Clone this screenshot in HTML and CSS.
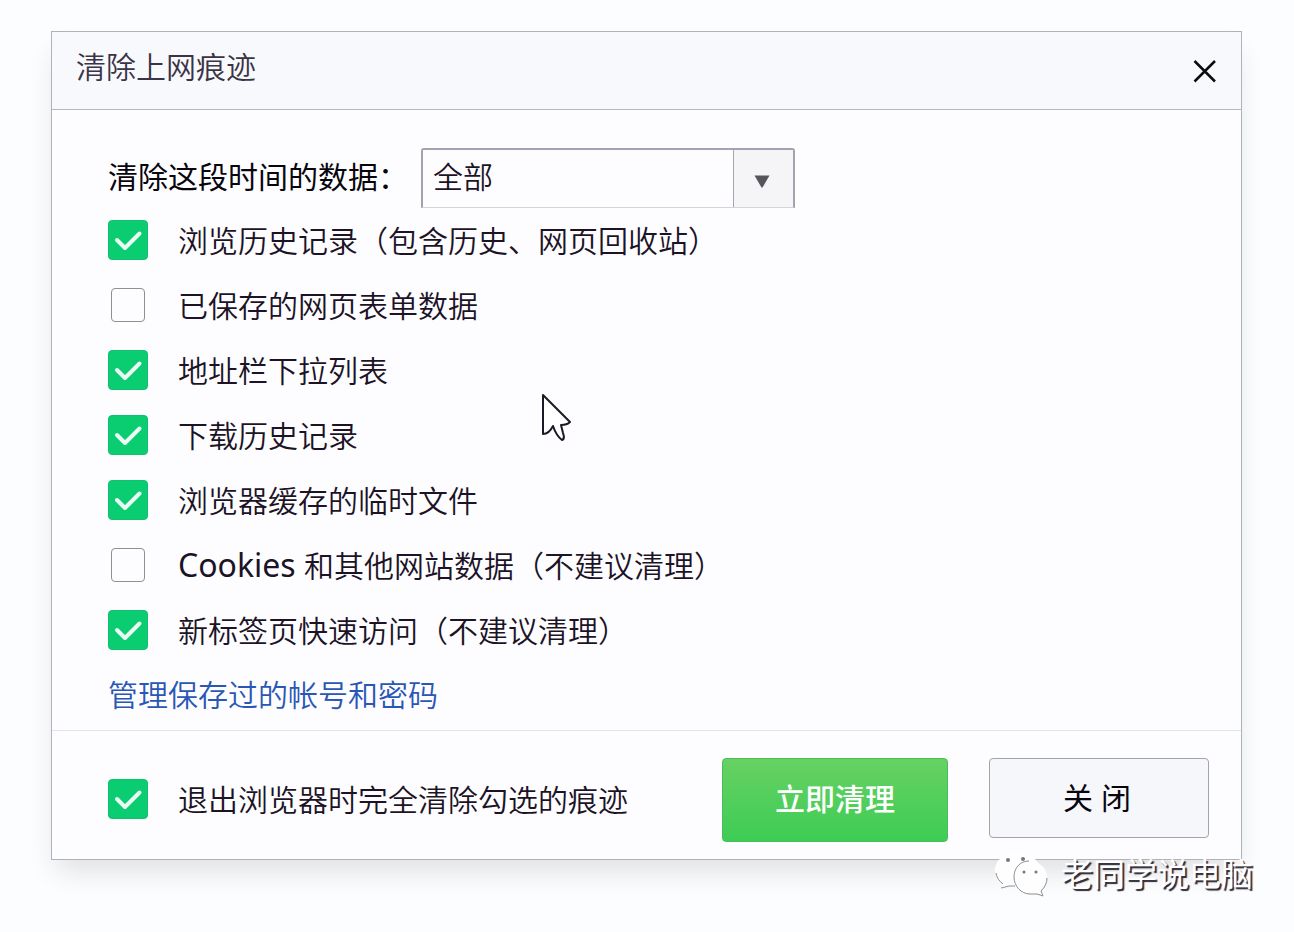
FILE: index.html
```html
<!DOCTYPE html>
<html lang="zh-CN">
<head>
<meta charset="utf-8">
<meta name="viewport" content="width=device-width, initial-scale=1">
<title>清除上网痕迹</title>
<link rel="stylesheet" href="styles.css">
</head>
<body>
<main class="stage">
  <form class="dialog" role="dialog" aria-labelledby="dialog-title">
    <header class="titlebar">
      <h1 class="title" id="dialog-title">清除上网痕迹</h1>
      <button class="close-icon" type="button" aria-label="关闭窗口">
        <svg width="24" height="24" viewBox="0 0 24 24" aria-hidden="true"><path d="M1.5 2 22 22.500M22 2 1.5 22.500"/></svg>
      </button>
    </header>

    <section class="content">
      <div class="period">
        <label class="period-label" for="period">清除这段时间的数据：</label>
        <div class="picker">
          <select class="picker-select" id="period">
            <option>全部</option>
          </select>
          <span class="picker-arrow"><svg width="16" height="13" viewBox="0 0 16 13" aria-hidden="true"><path d="M.5.5h15L8.500 12.500h-1z"/></svg></span>
        </div>
      </div>

      <div class="options">
        <label class="option"><span class="box"><input type="checkbox" checked><svg viewBox="0 0 40 40" aria-hidden="true"><path d="M9 20l8 8 14.500-14.500"/></svg></span><span>浏览历史记录（包含历史、网页回收站）</span></label>
        <label class="option"><span class="box"><input type="checkbox"><svg viewBox="0 0 40 40" aria-hidden="true"><path d="M9 20l8 8 14.500-14.500"/></svg></span><span>已保存的网页表单数据</span></label>
        <label class="option"><span class="box"><input type="checkbox" checked><svg viewBox="0 0 40 40" aria-hidden="true"><path d="M9 20l8 8 14.500-14.500"/></svg></span><span>地址栏下拉列表</span></label>
        <label class="option"><span class="box"><input type="checkbox" checked><svg viewBox="0 0 40 40" aria-hidden="true"><path d="M9 20l8 8 14.500-14.500"/></svg></span><span>下载历史记录</span></label>
        <label class="option"><span class="box"><input type="checkbox" checked><svg viewBox="0 0 40 40" aria-hidden="true"><path d="M9 20l8 8 14.500-14.500"/></svg></span><span>浏览器缓存的临时文件</span></label>
        <label class="option"><span class="box"><input type="checkbox"><svg viewBox="0 0 40 40" aria-hidden="true"><path d="M9 20l8 8 14.500-14.500"/></svg></span><span><span class="latin">Cookies </span>和其他网站数据（不建议清理）</span></label>
        <label class="option"><span class="box"><input type="checkbox" checked><svg viewBox="0 0 40 40" aria-hidden="true"><path d="M9 20l8 8 14.500-14.500"/></svg></span><span>新标签页快速访问（不建议清理）</span></label>
      </div>

      <a class="manage" href="#accounts">管理保存过的帐号和密码</a>
    </section>

    <footer class="footer">
      <label class="option"><span class="box"><input type="checkbox" checked><svg viewBox="0 0 40 40" aria-hidden="true"><path d="M9 20l8 8 14.500-14.500"/></svg></span><span>退出浏览器时完全清除勾选的痕迹</span></label>
      <div class="actions">
        <button class="button primary" type="submit">立即清理</button>
        <button class="button secondary" type="button">关 闭</button>
      </div>
    </footer>
  </form>

  <svg class="cursor" width="32" height="50" viewBox="0 0 32 50" aria-hidden="true"><path d="M2 2v39c5 0 8-4 10-8 2 6 5 11 9 14 3-1 2-4 1-7l-2-8c4 0 7-1 9-3z"/></svg>

  <div class="watermark">
    <svg width="56" height="46" viewBox="0 0 56 46" aria-hidden="true">
      <path class="bubble" d="M24 2C11 2 2 9 2 19c0 6 3 11 8 14l-2 5 8-3c3 1 6 1 9 1 13 0 22-7 22-17S37 2 24 2z"/>
      <path class="edge" d="M3 22c1 5 3 8 7 11M8 37l8-2h6"/>
      <circle cx="15" cy="9" r="2"/><circle cx="30" cy="8" r="2"/>
      <path class="bubble" d="M37 10c-9 0-16 7-16 16s7 17 16 17c3 0 5-1 7-2l6 4-2-7c4-3 6-7 6-12 0-9-8-16-17-16z"/>
      <path class="edge" d="M36 10c-9 0-15 7-15 16s7 17 16 17h7l6 2-2-5c4-4 6-8 6-13"/>
      <circle cx="31" cy="21" r="1.500"/><circle cx="43" cy="21" r="1.500"/>
    </svg>
    <span>老同学说电脑</span>
  </div>
</main>
</body>
</html>
```
FILE: styles.css
```css
* {
  box-sizing: border-box;
}

body {
  margin: 0;
  background: #fcfdfe;
  color: #1c1326;
  font: 350 30px/40px "Noto Sans", "Noto Sans CJK SC", sans-serif;
}

button,
select,
input {
  margin: 0;
  font: inherit;
  color: inherit;
}

.stage {
  position: relative;
  padding: 31px 52px 72px 51px;
}

.dialog {
  border: 1px solid #b0b1b9;
  background: #fdfdff;
  box-shadow: 0 16px 26px -6px rgba(40, 42, 50, 0.14);
}

.titlebar {
  display: flex;
  align-items: center;
  justify-content: space-between;
  height: 78px;
  padding: 0 24px;
  border-bottom: 1px solid #b5b6be;
  background: #f8f9fc;
}

.title {
  margin: 0;
  padding-bottom: 8px;
  font-size: 30px;
  font-weight: 350;
  color: #3b3346;
}

.close-icon {
  display: flex;
  padding: 0;
  border: 0;
  background: none;
}

.close-icon path {
  fill: none;
  stroke: #0c0c10;
  stroke-width: 2.500;
}

.content {
  padding: 38px 56px 0;
}

.period {
  display: flex;
  gap: 13px;
}

.period-label {
  padding-top: 9px;
  font-weight: 400;
  color: #08060c;
}

.picker {
  display: grid;
  grid-template-columns: 1fr 62px;
  width: 374px;
  height: 60px;
  padding: 0;
}

.picker-select {
  grid-area: 1 / 1 / 2 / 3;
  padding: 0 72px 3px 10px;
  appearance: none;
  border: 2px solid #a2a3b2;
  border-bottom: 1px solid #d3d4de;
  border-radius: 3px 3px 0 0;
  background: #fdfdff;
}

.picker-arrow {
  grid-area: 1 / 2;
  display: flex;
  align-items: center;
  justify-content: center;
  margin: 2px 2px 1px 0;
  padding: 6px 3px 0 0;
  border-left: 1px solid #a5a6b2;
  background: #f5f5f8;
  pointer-events: none;
}

.picker-arrow path {
  fill: #55555a;
}

.option {
  display: flex;
  align-items: center;
  gap: 30px;
  height: 65px;
}

.latin {
  font-size: 32px;
  font-weight: 400;
}

.box {
  display: grid;
  place-items: center;
  width: 40px;
  height: 40px;
  margin-bottom: 2px;
}

.box > * {
  grid-area: 1 / 1;
}

.box input {
  width: 34px;
  height: 34px;
  appearance: none;
  border: 1px solid #8f8f96;
  border-radius: 4px;
  background: #fdfdff;
}

.box input:checked {
  width: 40px;
  height: 40px;
  border: 1px solid #10c173;
  background: #0acd72;
}

.box svg {
  display: none;
  width: 40px;
  height: 40px;
  pointer-events: none;
}

.box input:checked + svg {
  display: block;
}

.box path {
  fill: none;
  stroke: #e9fff4;
  stroke-width: 4;
  stroke-linecap: round;
  stroke-linejoin: round;
}

.manage {
  display: inline-block;
  padding: 12px 0 15px;
  color: #2a57b5;
  text-decoration: none;
}

.footer {
  display: flex;
  align-items: center;
  justify-content: space-between;
  padding: 27px 32px 17px 56px;
  border-top: 1px solid #e4e5ea;
}

.actions {
  display: flex;
  gap: 41px;
}

.button {
  padding: 0 0 2px;
  border-radius: 4px;
  font-weight: 400;
}

.primary {
  width: 226px;
  height: 84px;
  border: 1px solid #49bd5a;
  background: linear-gradient(#67d163, #3dcc55);
  color: #fff;
  font-weight: 500;
}

.secondary {
  width: 220px;
  height: 80px;
  padding: 0 4px 0 0;
  border: 1px solid #a3a4ab;
  background: #f6f7fa;
  color: #08060c;
}

.cursor {
  position: absolute;
  top: 393px;
  left: 541px;
}

.cursor path {
  fill: #fff;
  stroke: #1c1824;
  stroke-width: 2;
  stroke-linejoin: round;
}

.watermark {
  position: absolute;
  right: 41px;
  bottom: 35px;
  display: flex;
  align-items: center;
  gap: 12px;
  color: #fff;
  font-size: 32px;
  font-weight: 400;
  text-shadow: 2px 2px 1px #2c2733;
}

.watermark circle {
  fill: #77777c;
}

.watermark .bubble {
  fill: #fefefe;
}

.watermark .edge {
  fill: none;
  stroke: #8f8f95;
  stroke-width: 1;
}
```
